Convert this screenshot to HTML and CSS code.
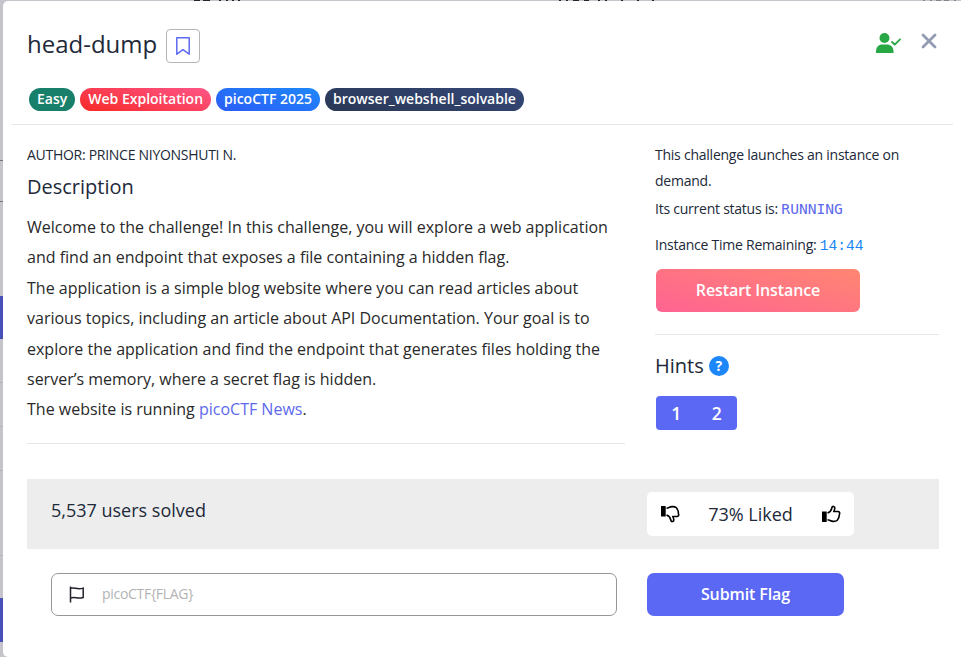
FILE: index.html
```html
<!DOCTYPE html>
<html lang="en">
<head>
<meta charset="utf-8">
<title>head-dump</title>
<link rel="stylesheet" href="styles.css">
</head>
<body>
<div class="backdrop" aria-hidden="true">
  <i class="cell cell-a"></i><i class="cell cell-b"></i><i class="block block-a"></i><i class="cell cell-c"></i><i class="cell cell-c"></i><i class="cell cell-c"></i><i class="cell cell-d"></i><i class="block block-b"></i>
</div>
<svg class="peek" width="961" height="2" viewBox="0 0 961 2" aria-hidden="true"><path d="M194 .5h6M203 .5h7M219 .5h2M226 .5h2M232 .5h2M238 .5h2M559 .5h2M566 .5h2M573 .5h6M584 .5h5M598 .5h2M605 .5h2M621 .5h2M637 .5h2M652 .5h2" stroke="#25242b"/><path d="M923 .5h2M930 .5h2M936 .5h5M944 .5h5M954 .5h2" stroke="#85848c"/></svg>
<main class="modal">
  <header class="header">
    <div class="title-row">
      <h1 class="title">head-dump</h1>
      <button class="bookmark" aria-label="Bookmark">
        <svg width="16" height="20" viewBox="0 0 16 20" fill="none" stroke="#5e6af0" stroke-width="1.5" stroke-linejoin="round"><path d="M1.8 1.8h12.4v16.4L8 13.7l-6.200 4.500z"/></svg>
      </button>
      <div class="actions">
        <svg class="solved" width="26" height="22" viewBox="0 0 26 22"><circle cx="9.500" cy="6" r="5" fill="#28a745"/><path d="M1 21v-1.500c0-4.500 3-7 6-7h4.500c4 0 7 2.500 7 7V21z" fill="#28a745"/><path d="M17 10l2.700 2.600L25 7.300" fill="none" stroke="#28a745" stroke-width="1.800" stroke-linecap="round" stroke-linejoin="round"/></svg>
        <svg class="close" width="16" height="16" viewBox="0 0 16 16" fill="none" stroke="#939bb3" stroke-width="2.800" stroke-linecap="round"><path d="M2 2l12 12M14 2L2 14"/></svg>
      </div>
    </div>
    <div class="tags">
      <span class="tag easy">Easy</span>
      <span class="tag web">Web Exploitation</span>
      <span class="tag event">picoCTF 2025</span>
      <span class="tag shell">browser_webshell_solvable</span>
    </div>
  </header>
  <div class="content">
    <section class="description">
      <p class="author">AUTHOR: PRINCE NIYONSHUTI N.</p>
      <h2 class="subhead">Description</h2>
      <div class="story">Welcome to the challenge! In this challenge, you will explore a web application<br>and find an endpoint that exposes a file containing a hidden flag.<br>The application is a simple blog website where you can read articles about<br>various topics, including an article about API Documentation. Your goal is to<br>explore the application and find the endpoint that generates files holding the<br>server’s memory, where a secret flag is hidden.<br>The website is running <a class="link">picoCTF News</a>.</div>
    </section>
    <aside class="side">
      <div class="instance">
        <p class="launch">This challenge launches an instance on<br>demand.</p>
        <p class="status">Its current status is: <code class="running">RUNNING</code></p>
        <p class="remaining">Instance Time Remaining: <code class="time">14:44</code></p>
        <button class="restart">Restart Instance</button>
      </div>
      <div class="hints-head"><h2 class="hints-title">Hints</h2><span class="help">?</span></div>
      <div class="hints"><span>1</span><span>2</span></div>
    </aside>
  </div>
  <section class="stats">
    <span class="solves">5,537 users solved</span>
    <div class="rating">
      <svg class="thumb down" width="20" height="18" viewBox="0 0 20 18"><path d="M1 6.500h4.700V17H1z"/><path class="hand" d="M6.500 8c2.500-.8 3.800-2.500 4.300-5 .4-2.300 3.200-2 3 .3-.1 1.200-.6 2.200-1 3.200h4.200c1.500 0 2 1.300 1.500 2.500-.2 3-.8 4.800-2.200 6.200-1.200 1.200-2.600 1.300-4.300 1.200-2.200-.1-3.500-1.400-5.500-1.600"/></svg>
      <span class="liked">73% Liked</span>
      <svg class="thumb" width="20" height="18" viewBox="0 0 20 18"><path d="M1 6.500h4.700V17H1z"/><path class="hand" d="M6.500 8c2.500-.8 3.800-2.500 4.300-5 .4-2.300 3.200-2 3 .3-.1 1.200-.6 2.200-1 3.200h4.200c1.500 0 2 1.300 1.500 2.500-.2 3-.8 4.800-2.200 6.200-1.200 1.200-2.600 1.300-4.300 1.200-2.200-.1-3.500-1.400-5.500-1.600"/></svg>
    </div>
  </section>
  <form class="submit-row">
    <label class="flag-field">
      <svg width="16" height="17" viewBox="0 0 16 17" fill="none" stroke="#20232c" stroke-width="1.500"><path d="M1.500.5v16M1.500 2.300c4-1.600 6 1.700 12.700-.2V11.500c-5.500 2-8-1.200-12.700.5"/></svg>
      <input class="flag-input" placeholder="picoCTF{FLAG}">
    </label>
    <button class="submit" type="button">Submit Flag</button>
  </form>
</main>
</body>
</html>
```
FILE: styles.css
```css
* { box-sizing: border-box; }
body { margin: 0; width: 961px; height: 657px; overflow: hidden; background: #c5c4ca; padding: 1px 0 0 3px; font-family: "Open Sans", "Noto Sans", sans-serif; color: #212939; }
h1, h2, p { margin: 0; font-weight: 400; }
button { border: 0; padding: 0 0 2px; font-family: inherit; }
svg { display: block; flex: none; }
.backdrop { position: absolute; left: 0; top: 0; width: 3px; height: 657px; display: flex; flex-direction: column; }
.peek { position: absolute; left: 0; top: 0; }
.cell { flex: none; border-bottom: 1px solid #77767d; }
.cell-a { height: 161px; }
.cell-b { height: 41px; }
.block { flex: none; background: #474fb8; margin-top: 94px; height: 43px; }
.cell-c { height: 44px; border-color: #b5b4bb; }
.cell-d { height: 85px; border-color: #b5b4bb; }
.block-b { margin-top: 42px; height: 44px; }
.modal { position: relative; height: 656px; background: #fff; border-radius: 5px 0 0 5px; }
.header { height: 124px; margin: 0 8px 0 9px; padding: 28px 0 0 15px; border-bottom: 1px solid #e6e6e6; }
.title-row { display: flex; height: 34px; }
.title { width: 139px; font-size: 24px; line-height: 30px; white-space: nowrap; }
.bookmark { width: 34px; height: 34px; padding: 0; display: grid; place-items: center; background: #fff; border: 1px solid #b3b5b8; border-radius: 4px; }
.actions { display: flex; gap: 20px; margin: 3px 16px 0 auto; }
.close { margin-top: 1px; }
.tags { display: flex; gap: 5px; margin: 25px 0 0 2px; }
.tag { height: 23px; border-radius: 12px; padding: 0 8px; font-size: 14px; font-weight: 600; line-height: 22px; color: #fff; white-space: nowrap; }
.easy { background: #18806a; }
.web { background: linear-gradient(15deg, #f62a28, #ff5689); }
.event { background: linear-gradient(15deg, #2b5cf5, #1e88fa); }
.shell { background: linear-gradient(15deg, #2a3856, #344777); }
.content { display: flex; margin-left: 24px; }
.description { width: 598px; height: 319px; padding-top: 17px; border-bottom: 1px solid #e6e6e6; }
.author { font-size: 14px; line-height: 26px; letter-spacing: -.28px; }
.subhead { font-size: 20px; line-height: 24px; margin-top: 7px; }
.story { font-size: 16px; line-height: 30.400px; margin-top: 13px; color: #292929; white-space: nowrap; }
.link { color: #5d69ed; }
.side { width: 284px; margin-left: 30px; padding-top: 17px; font-size: 14px; }
.instance { height: 193px; border-bottom: 1px solid #e6e6e6; }
.launch, .status, .remaining { height: 26px; line-height: 26px; letter-spacing: -.24px; white-space: nowrap; }
.launch { height: 52px; }
.status { margin-top: 2px; }
.remaining { margin-top: 10px; }
code { font-family: "Liberation Mono", monospace; font-size: 14.600px; letter-spacing: 0; line-height: 1; }
.running { font-family: "DejaVu Sans Mono", monospace; color: #5d69ed; }
.time { color: #1886f5; }
.restart { display: block; width: 204px; height: 43px; margin: 11px 0 0 1px; border-radius: 6px; background: linear-gradient(15deg, #ff6392, #ff8672); color: #fff; font-size: 16px; font-weight: 600; letter-spacing: -.1px; }
.hints-head { display: flex; align-items: center; gap: 5px; height: 24px; margin-top: 19px; }
.hints-title { font-size: 20px; line-height: 24px; }
.help { width: 20px; height: 20px; border-radius: 50%; background: #1d87fa; color: #fff; font-size: 14px; font-weight: 700; line-height: 20px; text-align: center; }
.hints { display: grid; grid-template-columns: 1fr 1fr; width: 81px; height: 34px; margin: 18px 0 0 1px; border-radius: 4px; background: #5b68f4; color: #fff; font-size: 17.500px; font-weight: 600; line-height: 34px; text-align: center; }
.stats { display: flex; width: 912px; height: 70px; margin: 35px 0 0 24px; padding: 13px 85px 13px 24px; background: #ededed; }
.solves { font-size: 18px; line-height: 36px; }
.rating { display: flex; align-items: center; justify-content: space-between; width: 207px; height: 44px; margin-left: auto; padding: 0 13px; background: #fff; border-radius: 5px; font-size: 18px; }
.hand { fill: none; stroke: #000; stroke-width: 1.600; stroke-linejoin: round; }
.down { transform: scaleY(-1); }
.submit-row { display: flex; gap: 30px; margin: 24px 0 0 48px; }
.flag-field { display: flex; align-items: center; width: 566px; height: 43px; padding-left: 17px; border: 1px solid #969696; border-radius: 7px; }
.flag-input { width: 450px; margin-left: 17px; padding: 0 0 2px; border: 0; outline: 0; font-family: inherit; font-size: 14px; letter-spacing: -.3px; }
.flag-input::placeholder { color: #b3b3b3; }
.submit { width: 197px; height: 43px; border-radius: 7px; background: #5b68f4; color: #fff; font-size: 16px; font-weight: 600; letter-spacing: -.1px; }
```
